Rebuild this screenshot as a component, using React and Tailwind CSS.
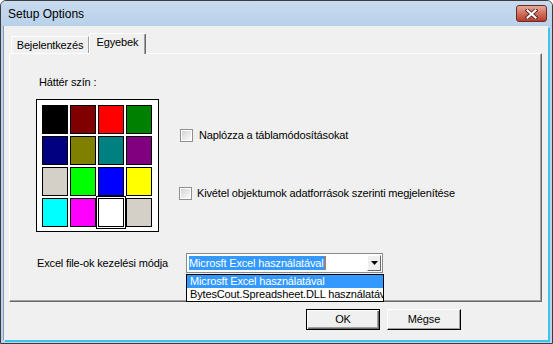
import React from "react";

const swatches = [
  "#000000", "#800000", "#ff0000", "#008000",
  "#000080", "#808000", "#008080", "#800080",
  "#d4d0c8", "#00ff00", "#0000ff", "#ffff00",
  "#00ffff", "#ff00ff", "#ffffff", "#d4d0c8",
];

const CloseGlyph = () => (
  <svg width="13" height="10" viewBox="0 0 13 10">
    <path d="M2.5 1.5 L10.5 8.5 M10.5 1.5 L2.5 8.5" stroke="#5a3030" strokeWidth="4" strokeLinecap="square" fill="none" />
    <path d="M2.5 1.5 L10.5 8.5 M10.5 1.5 L2.5 8.5" stroke="#ffffff" strokeWidth="2" strokeLinecap="square" fill="none" />
  </svg>
);

const Checkbox = () => (
  <div className="w-[13px] h-[13px] border border-[#8e8f8f] bg-white p-[1px] shrink-0">
    <div className="w-full h-full bg-gradient-to-br from-[#d2d4d8] to-[#fafafa]" />
  </div>
);

const App = () => {
  return (
    <div
      className="w-[553px] h-[344px] bg-[#bcd2ea] border border-[#3c3c3c] rounded-t-[6px] flex flex-col overflow-hidden text-[11px] tracking-[-0.15px] text-black"
      style={{ fontFamily: '"Liberation Sans", Arial, sans-serif' }}
    >
      {/* title bar */}
      <div className="h-[25px] shrink-0 flex justify-between bg-gradient-to-b from-[#c8dbef] to-[#b9d1ea]">
        <div className="pl-[7px] pt-[6px] text-[12px] leading-[15px] tracking-normal">Setup Options</div>
        <div className="pt-[4px] pr-[5px]">
          <div className="w-[31px] h-[17px] rounded-[3px] border border-[#6b2a22] bg-gradient-to-b from-[#e8a898] via-[#d0705e] to-[#b83a26] flex items-center justify-center">
            <CloseGlyph />
          </div>
        </div>
      </div>

      {/* client area */}
      <div className="flex">
        <div className="ml-[2px] w-[545px] h-[314px] bg-[#f0f0f0] border-l border-[#8c9cb0] shadow-[2px_2px_0_#3cc3f0] flex flex-col">
          {/* tabs */}
          <div className="pt-[7px] ml-[7px] flex items-end h-[27px]">
            <div className="w-[78px] h-[17px] border-t border-l border-white border-r border-r-[#a0a0a0] rounded-tl-[2px] flex items-center justify-center leading-[13px]">
              Bejelentkezés
            </div>
            <div className="relative z-10 w-[57px] h-[21px] -mb-[1px] bg-[#f0f0f0] border-t border-l border-white border-r border-r-[#696969] shadow-[inset_-1px_0_0_#a0a0a0] rounded-t-[2px] flex items-center justify-center pb-[3px] leading-[13px]">
              Egyebek
            </div>
          </div>

          {/* panel */}
          <div className="ml-[5px] w-[533px] h-[249px] border-t border-l border-white border-r border-b border-r-[#696969] border-b-[#696969] shadow-[inset_-1px_-1px_0_#a0a0a0] pt-[22px] pl-[26px]">
            <div className="ml-[3px] h-[13px] leading-[13px]">Háttér szín :</div>

            <div className="mt-[10px] flex">
              <div className="w-[123px] h-[133px] border border-black bg-white pl-[5px] pt-[5px]">
                <div className="grid grid-cols-[repeat(4,26px)] grid-rows-[repeat(4,29px)] gap-x-[2px] gap-y-[2px]">
                  {swatches.map((c, i) => (
                    <div
                      key={i}
                      className={
                        "border border-black " +
                        (i === 14 ? "outline outline-1 outline-black outline-offset-[1px]" : "")
                      }
                      style={{ backgroundColor: c }}
                    />
                  ))}
                </div>
              </div>

              <div className="ml-[21px] pt-[30px] flex flex-col">
                <div className="flex items-center gap-[6px] h-[13px]">
                  <Checkbox />
                  <span className="leading-[13px]">Naplózza a táblamódosításokat</span>
                </div>
                <div className="mt-[45px] -ml-[1px] flex items-center gap-[5px] h-[13px]">
                  <Checkbox />
                  <span className="leading-[13px]">Kivétel objektumok adatforrások szerinti megjelenítése</span>
                </div>
              </div>
            </div>

            <div className="mt-[21px] flex items-center">
              <div className="w-[150px] pl-[1px] leading-[13px]">Excel file-ok kezelési módja</div>
              <div className="relative">
                <div className="w-[197px] h-[20px] border border-[#8a8a8a] bg-white flex items-center">
                  <div className="flex-1 pl-[2px] flex items-center">
                    <span className="h-[14px] leading-[14px] bg-[#3399ff] text-white pr-[1px] border-r border-[#e07020]">
                      Microsft Excel használatával
                    </span>
                  </div>
                  <div className="w-[14px] h-[16px] mr-[1px] bg-[#f0f0f0] border-t border-l border-white border-r border-b border-r-[#696969] border-b-[#696969] flex items-center justify-center">
                    <svg width="7" height="4" viewBox="0 0 7 4">
                      <path d="M0 0 H7 L3.5 4 Z" fill="#000" />
                    </svg>
                  </div>
                </div>
                <div className="absolute left-0 top-[21px] z-20 w-[198px] h-[28px] border border-black bg-white overflow-hidden whitespace-nowrap">
                  <div className="h-[13px] leading-[13px] pl-[3px] bg-[#3399ff] text-white">Microsft Excel használatával</div>
                  <div className="h-[13px] leading-[13px] pl-[3px]">BytesCout.Spreadsheet.DLL használatáv</div>
                </div>
              </div>
            </div>
          </div>

          {/* buttons */}
          <div className="mt-[7px] pl-[302px] flex gap-[7px]">
            <button className="w-[74px] h-[21px] border border-black bg-[#f0f0f0] shadow-[inset_1px_1px_0_#ffffff,inset_-1px_-1px_0_#696969,inset_-2px_-2px_0_#a0a0a0] leading-[13px]">
              OK
            </button>
            <button className="w-[74px] h-[21px] border-t border-l border-white border-r border-b border-r-black border-b-black bg-[#f0f0f0] shadow-[inset_-1px_-1px_0_#a0a0a0] leading-[13px]">
              Mégse
            </button>
          </div>
        </div>
      </div>
    </div>
  );
};

export default App;
